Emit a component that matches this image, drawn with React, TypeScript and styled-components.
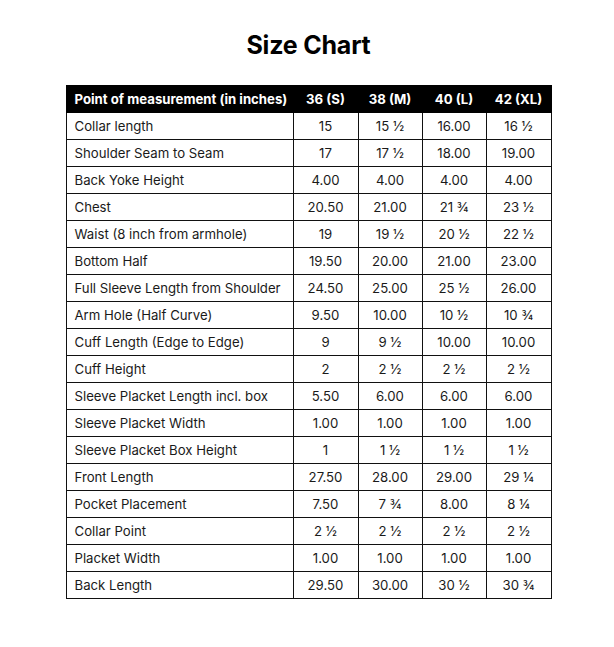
import React from "react";
import styled, { createGlobalStyle } from "styled-components";

const GlobalStyle = createGlobalStyle`
  html, body {
    margin: 0;
    padding: 0;
    background: #ffffff;
    font-family: Inter, "Noto Sans", sans-serif;
  }
`;

const Page = styled.div`
  display: flex;
  flex-direction: column;
  align-items: center;
  padding: 29px 0 0 3px;
`;

const Title = styled.h1`
  margin: 0 0 24px;
  font-size: 25px;
  line-height: 32px;
  font-weight: 700;
  color: #000;
  letter-spacing: -0.2px;
`;

const Table = styled.table`
  border-collapse: collapse;
  width: 485px;
  table-layout: fixed;
  font-size: 13.2px;
  color: #1a1a1a;
`;

const Col = styled.col<{ $w: number }>`
  width: ${(p) => p.$w}px;
`;

const HeadCell = styled.th<{ $first?: boolean }>`
  background: #000;
  color: #fff;
  font-weight: 700;
  height: 26px;
  padding: 0 ${(p) => (p.$first ? "8px" : "2px")};
  text-align: ${(p) => (p.$first ? "left" : "center")};
  border: 1px solid #000;
  white-space: nowrap;
`;

const Cell = styled.td<{ $first?: boolean }>`
  height: 26px;
  padding: 0 ${(p) => (p.$first ? "8px" : "2px")};
  text-align: ${(p) => (p.$first ? "left" : "center")};
  border: 1px solid #111;
  white-space: nowrap;
`;

const columns = [227, 65, 64, 64, 65];
const sizes = ["36 (S)", "38 (M)", "40 (L)", "42 (XL)"];

const rows: [string, string, string, string, string][] = [
  ["Collar length", "15", "15 ½", "16.00", "16 ½"],
  ["Shoulder Seam to Seam", "17", "17 ½", "18.00", "19.00"],
  ["Back Yoke Height", "4.00", "4.00", "4.00", "4.00"],
  ["Chest", "20.50", "21.00", "21 ¾", "23 ½"],
  ["Waist (8 inch from armhole)", "19", "19 ½", "20 ½", "22 ½"],
  ["Bottom Half", "19.50", "20.00", "21.00", "23.00"],
  ["Full Sleeve Length from Shoulder", "24.50", "25.00", "25 ½", "26.00"],
  ["Arm Hole (Half Curve)", "9.50", "10.00", "10 ½", "10 ¾"],
  ["Cuff Length (Edge to Edge)", "9", "9 ½", "10.00", "10.00"],
  ["Cuff Height", "2", "2 ½", "2 ½", "2 ½"],
  ["Sleeve Placket Length incl. box", "5.50", "6.00", "6.00", "6.00"],
  ["Sleeve Placket Width", "1.00", "1.00", "1.00", "1.00"],
  ["Sleeve Placket Box Height", "1", "1 ½", "1 ½", "1 ½"],
  ["Front Length", "27.50", "28.00", "29.00", "29 ¼"],
  ["Pocket Placement", "7.50", "7 ¾", "8.00", "8 ¼"],
  ["Collar Point", "2 ½", "2 ½", "2 ½", "2 ½"],
  ["Placket Width", "1.00", "1.00", "1.00", "1.00"],
  ["Back Length", "29.50", "30.00", "30 ½", "30 ¾"],
];

const App: React.FC = () => {
  return (
    <>
      <GlobalStyle />
      <Page>
        <Title>Size Chart</Title>
        <Table>
          <colgroup>
            {columns.map((w, i) => (
              <Col key={i} $w={w} />
            ))}
          </colgroup>
          <thead>
            <tr>
              <HeadCell $first>Point of measurement (in inches)</HeadCell>
              {sizes.map((s) => (
                <HeadCell key={s}>{s}</HeadCell>
              ))}
            </tr>
          </thead>
          <tbody>
            {rows.map((r) => (
              <tr key={r[0]}>
                <Cell $first>{r[0]}</Cell>
                {r.slice(1).map((v, i) => (
                  <Cell key={i}>{v}</Cell>
                ))}
              </tr>
            ))}
          </tbody>
        </Table>
      </Page>
    </>
  );
};

export default App;
